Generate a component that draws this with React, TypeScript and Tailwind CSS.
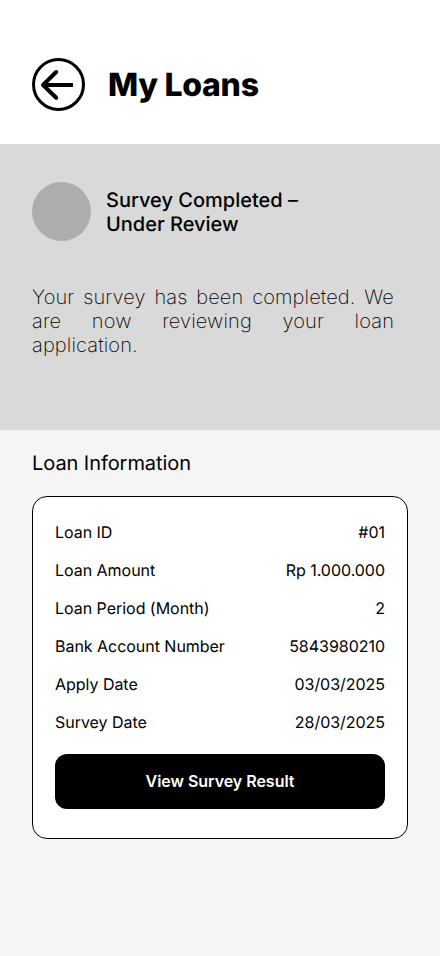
import React from "react";

const rows: [string, string][] = [
  ["Loan ID", "#01"],
  ["Loan Amount", "Rp 1.000.000"],
  ["Loan Period (Month)", "2"],
  ["Bank Account Number", "5843980210"],
  ["Apply Date", "03/03/2025"],
  ["Survey Date", "28/03/2025"],
];

export default function App() {
  return (
    <main className="flex h-[956px] w-[440px] flex-col bg-[#f5f5f5] font-['Inter',sans-serif] text-black antialiased [text-rendering:geometricPrecision]">
      <header className="flex h-36 items-center gap-[23px] bg-white px-8 pt-[25px]">
        <button aria-label="Back" className="size-[53px]">
          <svg viewBox="0 0 53 53" className="size-full" fill="none" stroke="black" strokeWidth="3">
            <circle cx="26.5" cy="26.5" r="25" />
            <path d="M41 27H12" strokeWidth="4" />
            <path d="M24.2 14L11 27L24.2 39.8" strokeWidth="4" strokeLinecap="round" strokeLinejoin="round" />
          </svg>
        </button>
        <h1 className="text-[32px] font-extrabold leading-[39px] tracking-[-0.3px]">My Loans</h1>
      </header>
      <section className="h-[286px] bg-[#d9d9d9] px-8 pt-[38px]">
        <div className="flex items-center gap-[15px]">
          <div className="size-[59px] rounded-full bg-[#adadad]" />
          <h2 className="text-xl font-medium leading-6">Survey Completed –<br />Under Review</h2>
        </div>
        <p className="mt-11 w-[362px] text-justify text-xl font-extralight leading-6 tracking-[0.13px]">
          Your survey has been completed. We are now reviewing your loan application.
        </p>
      </section>
      <section className="px-8 pt-[21px]">
        <h2 className="text-xl leading-6 tracking-[-0.06px]">Loan Information</h2>
        <div className="mt-[21px] h-[343px] rounded-[15px] border border-black bg-white px-[22px] pt-[26px]">
          <dl className="flex flex-col gap-[19px]">
            {rows.map(([label, value]) => (
              <div key={label} className="flex justify-between text-base leading-[19px] tracking-[-0.03px]">
                <dt>{label}</dt>
                <dd>{value}</dd>
              </div>
            ))}
          </dl>
          <button className="mt-[22px] flex h-[55px] w-full items-center justify-center rounded-xl bg-black pb-px text-base font-semibold leading-[19px] tracking-[-0.03px] text-white">
            View Survey Result
          </button>
        </div>
      </section>
    </main>
  );
}
